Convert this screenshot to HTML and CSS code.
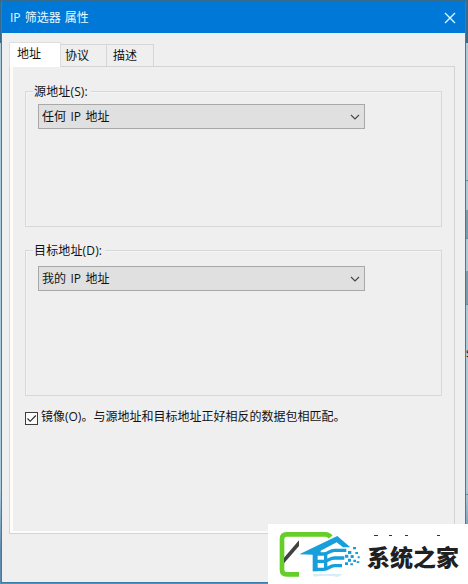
FILE: index.html
```html
<!DOCTYPE html>
<html lang="zh-CN">

<head>
  <meta charset="UTF-8">
  <meta name="viewport" content="width=device-width, initial-scale=1.0">
  <title>IP 筛选器 属性</title>
  <link rel="stylesheet" href="styles.css">
</head>

<body>

  <div class="dialog">
    <div class="titlebar">
      <span>IP 筛选器 属性</span>
      <svg class="close" viewBox="0 0 12 12">
        <path d="M1 1L11 11M11 1L1 11" />
      </svg>
    </div>

    <div class="content">
      <div class="tabs">
        <div class="tab active">地址</div>
        <div class="tab">协议</div>
        <div class="tab">描述</div>
      </div>

      <div class="panel">
        <div class="group source">
          <span class="group-title">源地址(S):</span>
          <div class="select">
            <span>任何 IP 地址</span>
            <svg class="arrow" viewBox="0 0 10 6">
              <path d="M1 1L5 5L9 1" />
            </svg>
          </div>
        </div>

        <div class="group target">
          <span class="group-title">目标地址(D):</span>
          <div class="select">
            <span>我的 IP 地址</span>
            <svg class="arrow" viewBox="0 0 10 6">
              <path d="M1 1L5 5L9 1" />
            </svg>
          </div>
        </div>

        <div class="mirror">
          <span class="checkbox">
            <svg viewBox="0 0 11 11">
              <path d="M1.5 5.5L4.2 8.3L9.8 2.5" />
            </svg>
          </span>
          <span class="mirror-text">镜像(O)。与源地址和目标地址正好相反的数据包相匹配。</span>
        </div>
      </div>
    </div>
  </div>

  <!-- window behind the dialog, visible at the right edge -->
  <div class="behind">
    <div class="behind-title"></div>
    <div class="behind-row"></div>
    <div class="behind-row shade"></div>
    <div class="behind-row shade second"></div>
    <div class="behind-row">s</div>
  </div>

  <div class="watermark">
    <svg class="logo" viewBox="-18 -6 285 180">
      <path class="frame" d="M75 145H38Q24 145 24 131V39Q24 25 38 25H154Q164 25 170 33" />
      <path class="pen" d="M30 95L75 43V60L30 112Z" />
      <path class="house" d="M76 85L190 30L229 64H207L188 49L140 74V86H118Z" />
      <path class="house" d="M116 84H131V136H116Z" />
      <path class="wave" d="M126 84H148C165 84 165 73 182 73H217" />
      <path class="wave" d="M126 106H148C165 106 165 96 182 96H211" />
      <path class="wave" d="M126 130H148C165 130 165 119 182 119H204" />
      <path class="wave" d="M155 84V128" />
      <path class="house" d="M222 75H232V84H222ZM237 63H246V70H237ZM213 86H223V95H213ZM230 87H239V96H230ZM244 78H252V84H244ZM222 98H231V107H222ZM238 101H246V108H238ZM251 91H257V97H251ZM213 109H222V117H213ZM229 112H237V118H229ZM248 106H256V111H248Z" />
      <path class="reflection" d="M116 144H205L192 153Q160 146 120 152Z" />
    </svg>
    <div class="brand">
      <svg class="marks" viewBox="0 0 92 3">
        <path d="M7 0h4v1h-4zM22 0h3v1h-3zM38 0h3v1h-3zM70 0h3v1h-3z" />
      </svg>
      <span>系统之家</span>
    </div>
  </div>

</body>

</html>
```
FILE: styles.css
```css
* {
  box-sizing: border-box;
}

body {
  margin: 0;
  width: 468px;
  height: 584px;
  overflow: hidden;
  display: flex;
  position: relative;
  padding: 1px 0 0 1px;
  background: linear-gradient(#376b8b 0, #376b8b 43px, #a9cbdc 43px, #a9cbdc 490px, #608bad 550px);
  font: 12px/16px "Open Sans", "Noto Sans CJK SC", sans-serif;
  color: #111;
}

svg {
  display: block;
  fill: none;
}

.dialog {
  flex-shrink: 0;
  width: 465px;
  height: 582px;
  background-color: #efefef;
  border: 1px solid #3d7ca4;
  border-top-color: #1d71ad;
}

.titlebar {
  height: 31px;
  padding: 0 9px 0 8px;
  display: flex;
  align-items: center;
  justify-content: space-between;
  background-color: #0078d7;
  color: #e9faff;
  word-spacing: 1px;
}

.close {
  width: 12px;
  height: 12px;
  stroke: #d9faff;
  stroke-width: 1.4;
}

.content {
  padding: 9px 10px 0 7px;
}

.tabs {
  display: flex;
  align-items: flex-start;
  height: 24px;
}

.tab {
  width: 46px;
  height: 22px;
  margin-top: 2px;
  padding: 3px 0 0 4px;
  border: 1px solid #d6d6d6;
  border-left: none;
  border-bottom: none;
}

.tab:last-child {
  width: 47px;
  padding-left: 6px;
}

/* one pixel taller than the row, so it covers the panel border */
.tab.active {
  position: relative;
  width: 52px;
  height: 25px;
  margin-top: 0;
  padding: 3px 0 0 7px;
  background-color: #fff;
  border: 1px solid #dedede;
  border-bottom: none;
}

.panel {
  height: 468px;
  padding: 24px 9px 0 15px;
  border: 1px solid #d4d4d4;
  box-shadow: inset 3px -2px #fdfcf9;
}

.group {
  width: 417px;
  border: 1px solid #d7d9d9;
  box-shadow: inset 1px 1px #f5f5f5;
  padding: 0 0 0 12px;
}

.source {
  height: 136px;
}

.target {
  height: 146px;
  margin-top: 23px;
}

.group-title {
  display: block;
  width: max-content;
  height: 16px;
  margin: -8px 0 4px -5px;
  padding: 0 3px 0 1px;
  background-color: #efefef;
  letter-spacing: 0.15px;
}

.target .group-title {
  margin-bottom: 7px;
}

.select {
  width: 327px;
  height: 25px;
  padding: 0 4px 0 3px;
  display: flex;
  align-items: center;
  justify-content: space-between;
  background-color: #e0e0e0;
  border: 1px solid #a8a8a8;
  word-spacing: 1.3px;
}

.arrow {
  width: 10px;
  height: 6px;
  stroke: #444;
  stroke-width: 1.1;
}

.mirror {
  display: flex;
  margin-top: 13px;
}

.checkbox {
  width: 13px;
  height: 13px;
  margin: 3px 3px 0 0;
  border: 1px solid #3c3c3c;
  background-color: #fafafa;
}

.checkbox svg {
  stroke: #222;
  stroke-width: 1.1;
}

.mirror-text {
  white-space: nowrap;
}

.behind {
  flex: 1;
  overflow: hidden;
}

.behind-title {
  height: 42px;
  background-color: #376b8b;
}

.behind-row {
  height: 138px;
  border-bottom: 1px solid #608a9e;
}

.behind-row.shade {
  height: 58px;
  background: linear-gradient(#a9cbdc 50%, #779baf 50%);
}

.behind-row.second {
  height: 66px;
}

.behind-row:last-child {
  padding-top: 40px;
  height: 190px;
}

/* site badge over the bottom right corner */
.watermark {
  position: absolute;
  right: 0;
  bottom: 0;
  width: 200px;
  height: 60px;
  display: flex;
  background-color: #fff;
}

.logo {
  width: 95px;
  height: 60px;
}

.frame {
  stroke: #65ce28;
  stroke-width: 14;
}

.pen {
  fill: #414141;
}

.house {
  fill: #169fda;
}

.wave {
  stroke: #169fda;
  stroke-width: 10;
}

.reflection {
  fill: #d5edf7;
}

.brand {
  padding: 11px 0 0 4px;
  font: 900 23px/24px "Noto Sans CJK SC", sans-serif;
  color: #202020;
  white-space: nowrap;
}

.marks {
  width: 92px;
  height: 3px;
  margin-bottom: 6px;
  fill: #333;
}
```
